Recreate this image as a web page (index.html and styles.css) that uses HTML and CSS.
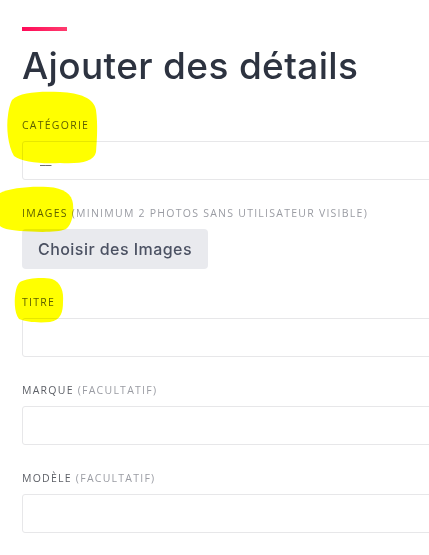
FILE: index.html
```html
<!DOCTYPE html>
<html lang="fr">
    <head>
        <meta charset="utf-8">
        <title>Ajouter des détails</title>
        <link rel="stylesheet" href="styles.css">
    </head>
    <body>
        <div class="page">
            <span class="accent"></span>
            <h1>Ajouter des détails</h1>

            <div class="field">
                <label>Catégorie</label>
                <div class="input select"><span class="placeholder">__</span></div>
            </div>

            <div class="field">
                <label>Images <span class="hint">(minimum 2 photos sans utilisateur visible)</span></label>
                <button class="pick">Choisir des Images</button>
            </div>

            <div class="field">
                <label>Titre</label>
                <div class="input"></div>
            </div>

            <div class="field">
                <label>Marque <span class="hint">(facultatif)</span></label>
                <div class="input"></div>
            </div>

            <div class="field">
                <label>Modèle <span class="hint">(facultatif)</span></label>
                <div class="input"></div>
            </div>
        </div>

        <!-- highlighter marks drawn over the screenshot -->
        <svg class="marks" width="429" height="555" viewBox="0 0 429 555">
            <path d="M12 100 C20 92 40 91 60 92 C80 93 94 98 96 110 C98 125 97 140 96 152 C94 162 80 164 60 163 C40 164 22 162 14 156 C8 146 6 128 8 115 C9 108 10 104 12 100 Z"/>
            <path d="M0 193 C10 188 30 186 48 187 C64 188 72 194 73 204 C74 214 72 224 66 229 C56 233 36 232 20 231 C8 230 2 228 0 226 Z"/>
            <path d="M20 282 C28 278 42 277 52 279 C61 282 64 292 63 302 C63 312 61 320 50 322 C38 323 26 322 19 319 C14 313 14 298 16 290 C17 286 18 284 20 282 Z"/>
        </svg>
    </body>
</html>
```

FILE: styles.css
```css
html, body
{
    margin: 0;
    overflow: hidden;
}

body
{
    background-color: #ffffff;
    font-family: 'Open Sans', sans-serif;
    position: relative;
    width: 429px;
    height: 555px;
}

.page
{
    padding: 27px 0 0 22px;
    width: 560px;
}

.accent
{
    display: block;
    width: 45px;
    height: 4px;
    background: linear-gradient(90deg, #ff0a58, #ff3c6e);
}

h1
{
    margin: 12px 0 0 0;
    font-family: 'Inter', sans-serif;
    font-weight: 500;
    font-size: 37px;
    line-height: 46px;
    letter-spacing: 0.35px;
    color: #2d3340;
}

.field
{
    display: flex;
    flex-direction: column;
    align-items: flex-start;
    margin-top: 26px;
}

h1 + .field
{
    margin-top: 29px;
}

label
{
    font-size: 10.5px;
    line-height: 14px;
    letter-spacing: 1.25px;
    text-transform: uppercase;
    color: #5c5f66;
    margin-bottom: 9px;
}

.hint
{
    color: #9a9ca3;
}

.input
{
    box-sizing: border-box;
    width: 100%;
    height: 39px;
    border: 1px solid #e7e7e9;
    border-radius: 3px;
    background-color: #ffffff;
}

.select
{
    display: flex;
    align-items: center;
    padding-left: 17px;
}

.placeholder
{
    font-size: 13px;
    color: #444;
    position: relative;
    top: -2px;
}

.pick
{
    height: 40px;
    padding: 0 16px;
    border: none;
    border-radius: 4px;
    background-color: #e9eaee;
    font-family: 'Inter', sans-serif;
    font-weight: 500;
    font-size: 16px;
    letter-spacing: 0.45px;
    color: #4b5162;
}

.marks
{
    position: absolute;
    top: 0;
    left: 0;
    pointer-events: none;
    mix-blend-mode: multiply;
}

.marks path
{
    fill: #ffff00;
}
```
